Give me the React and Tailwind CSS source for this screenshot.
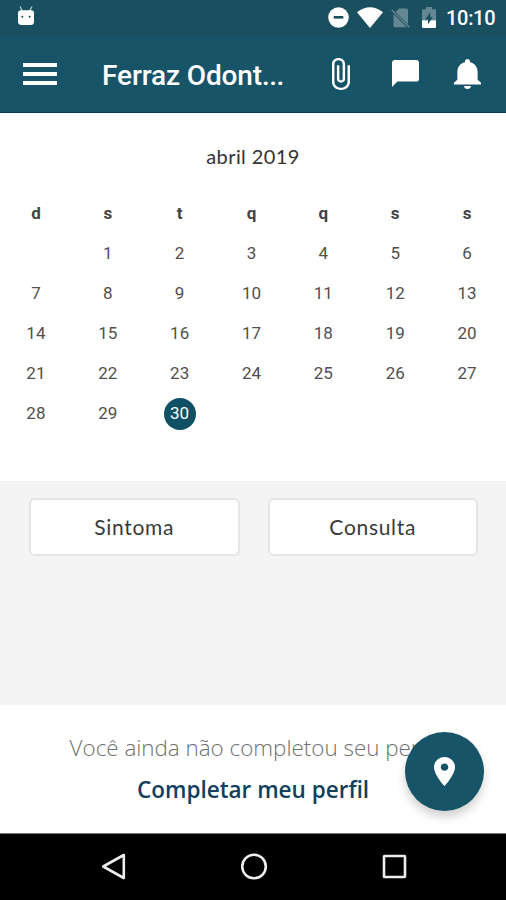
const WEEKDAYS = ["d", "s", "t", "q", "q", "s", "s"];

// April 2019 starts on a Monday
const DAYS = [null, ...Array.from({ length: 30 }, (_, i) => i + 1)];
const TODAY = 30;

function StatusBar() {
  return (
    <div className="h-[35px] bg-[#194f5f] flex items-center pl-[18px] pr-[10px]">
      <svg className="w-4 h-5 -mt-[3px]" viewBox="0 0 16 20" fill="white">
        <path d="M2 .5L4.4 5M14 .5L11.6 5" stroke="#b9cfd5" strokeWidth="1.3" />
        <path d="M0 7Q0 4.5 3 4.2H13Q16 4.5 16 7V15.5Q16 19 12.5 19H3.5Q0 19 0 15.5Z" />
        <circle cx="4.3" cy="10.8" r="1" fill="#194f5f" />
        <circle cx="11.7" cy="10.8" r="1" fill="#194f5f" />
      </svg>

      <div className="ml-auto flex items-center">
        <svg className="w-[21px] h-[21px]" viewBox="0 0 21 21">
          <circle cx="10.5" cy="10.5" r="10.3" fill="white" />
          <rect x="5.7" y="9" width="9.6" height="2.6" fill="#194f5f" />
        </svg>
        <svg className="w-[26px] h-[21px] ml-[8px]" viewBox="0 0 26 21" fill="white">
          <path d="M0 5.2Q13-4.5 26 5.2L13 21Z" />
        </svg>
        <svg className="w-[19px] h-5 ml-[8px]" viewBox="0 0 19 20">
          <path d="M8 .5H15.5Q17 .5 17 2V16.2L4.6 4Z" fill="#648893" />
          <path d="M2.5 6L15.8 19.3H4Q2.5 19.3 2.5 17.8Z" fill="#648893" />
          <path d="M.7 2L18.3 19.3" stroke="#648893" strokeWidth="1.5" />
        </svg>
        <svg className="w-[14px] h-[21px] ml-[12px]" viewBox="0 0 14 21">
          <path d="M4 0H10V2.3H12.7Q14 2.3 14 3.6V13H0V3.6Q0 2.3 1.3 2.3H4Z" fill="#648893" />
          <path d="M0 13.3H14V19.7Q14 21 12.7 21H1.3Q0 21 0 19.7Z" fill="white" />
          <path d="M8.2 5L3.3 12.6H6V17.3L10.8 10H8.2Z" fill="#194f5f" />
        </svg>
        <span className="ml-[10px] w-[50px] pt-px text-[20px] leading-none font-medium tracking-[-0.3px] text-white whitespace-nowrap">10:10</span>
      </div>
    </div>
  );
}

function Header() {
  return (
    <header className="h-[78px] bg-[#185467] border-b border-[#0c3c55] flex items-center pl-[23px] pr-[25px]">
      <div className="w-[34px] flex flex-col gap-[5px]">
        <span className="h-[4px] bg-white" />
        <span className="h-[4px] bg-white" />
        <span className="h-[4px] bg-white" />
      </div>
      <h1 className="ml-[45px] w-[190px] text-[28px] leading-none font-medium tracking-[-0.12px] text-white whitespace-nowrap pt-[4px]">
        Ferraz Odont<span className="tracking-[-0.5px]">...</span>
      </h1>
      <div className="ml-auto flex items-center">
        <svg className="w-[18px] h-8" viewBox="7 1 11 22" preserveAspectRatio="none" fill="white">
          <path d="M16.5 6v11.5c0 2.21-1.79 4-4 4s-4-1.79-4-4V5c0-1.38 1.12-2.5 2.5-2.5s2.5 1.12 2.5 2.5v10.5c0 .55-.45 1-1 1s-1-.45-1-1V6H10v9.5c0 1.38 1.12 2.5 2.5 2.5s2.5-1.12 2.5-2.5V5c0-2.21-1.79-4-4-4S7 2.79 7 5v12.5c0 3.04 2.46 5.5 5.5 5.5s5.5-2.46 5.5-5.5V6h-1.5z" />
        </svg>
        <svg className="w-[27px] h-[27px] ml-[42px]" viewBox="2 2 20 20" fill="white">
          <path d="M20 2H4c-1.1 0-1.99.9-1.99 2L2 22l4-4h14c1.1 0 2-.9 2-2V4c0-1.1-.9-2-2-2z" />
        </svg>
        <svg className="w-[27px] h-[30px] ml-[35px]" viewBox="4 2.5 16 19.5" preserveAspectRatio="none" fill="white">
          <path d="M12 22c1.1 0 2-.9 2-2h-4c0 1.1.89 2 2 2zm6-6v-5c0-3.07-1.64-5.64-4.5-6.32V4c0-.83-.67-1.5-1.5-1.5s-1.5.67-1.5 1.5v.68C7.63 5.36 6 7.92 6 11v5l-2 2v1h16v-1l-2-2z" />
        </svg>
      </div>
    </header>
  );
}

function Calendar() {
  return (
    <section className="h-[368px] bg-white pt-[31px]">
      <h2 className="text-center text-[20px] leading-6 tracking-[0.4px] text-[#333] font-[Lato,sans-serif]">
        abril 2019
      </h2>
      <div className="mt-[26px] w-[503px] grid grid-cols-7 auto-rows-[40px] text-[17px] text-[#505050]">
        {WEEKDAYS.map((day, i) => (
          <div key={i} className="flex items-center justify-center font-bold text-[#444]">
            {day}
          </div>
        ))}
        {DAYS.map((day, i) => (
          <div key={i} className="flex items-center justify-center">
            {day === TODAY ? (
              <span className="w-8 h-8 rounded-full bg-[#105064] text-white flex items-center justify-center">{day}</span>
            ) : (
              day
            )}
          </div>
        ))}
      </div>
    </section>
  );
}

function ActionButton({ label }) {
  return (
    <button className="h-[58px] flex-1 rounded-[6px] border-[2.5px] border-[#e5e5e5] bg-white text-[21px] tracking-[0.7px] text-[#3a3a3a] font-[Lato,sans-serif]">
      {label}
    </button>
  );
}

function NavigationBar() {
  return (
    <nav className="h-[67px] bg-black border-t border-[#777] flex items-center justify-between pl-[101px] pr-[99px] pb-px">
      <svg className="w-[25px] h-[27px]" viewBox="0 0 25 27" fill="none">
        <path d="M22.8 2V25L2.2 13.5Z" stroke="#eee" strokeWidth="2.6" strokeLinejoin="round" />
      </svg>
      <svg className="w-[27px] h-[27px]" viewBox="0 0 27 27" fill="none">
        <circle cx="13" cy="13.5" r="11.8" stroke="#eee" strokeWidth="2.6" />
      </svg>
      <svg className="w-[25px] h-[25px]" viewBox="0 0 25 25" fill="none">
        <rect x="2" y="2" width="21" height="21" rx="0.5" stroke="#eee" strokeWidth="2.6" />
      </svg>
    </nav>
  );
}

export default function App() {
  return (
    <div className="w-[506px] h-[900px] flex flex-col overflow-hidden bg-[#f4f4f4] font-[Roboto,sans-serif]">
      <StatusBar />
      <Header />
      <Calendar />

      <div className="h-[224px] border-t border-[#efefef] flex items-start gap-[28px] pl-[29px] pr-[28px] pt-[16px]">
        <ActionButton label="Sintoma" />
        <ActionButton label="Consulta" />
      </div>

      <section className="relative h-[128px] bg-white pt-[28px] text-center font-['Open_Sans',sans-serif]">
        <p className="text-[22.4px] leading-[30px] font-light text-[#707070] whitespace-nowrap">
          Você ainda não completou seu perfil
        </p>
        <p className="mt-[12px] text-[22.5px] leading-[30px] font-semibold text-[#123f5c] whitespace-nowrap">
          Completar meu perfil
        </p>
        {/* Floating location button */}
        <button className="absolute top-[27px] right-[22px] w-[79px] h-[79px] rounded-full bg-[#185467] shadow-[0_6px_10px_rgba(0,0,0,0.18)] flex items-center justify-center">
          <svg className="w-[21px] h-[29px]" viewBox="5 2 14 20" preserveAspectRatio="none" fill="white">
            <path d="M12 2C8.13 2 5 5.13 5 9c0 5.25 7 13 7 13s7-7.75 7-13c0-3.87-3.13-7-7-7zm0 9.5c-1.38 0-2.5-1.12-2.5-2.5s1.12-2.5 2.5-2.5 2.5 1.12 2.5 2.5-1.12 2.5-2.5 2.5z" />
          </svg>
        </button>
      </section>

      <NavigationBar />
    </div>
  );
}
